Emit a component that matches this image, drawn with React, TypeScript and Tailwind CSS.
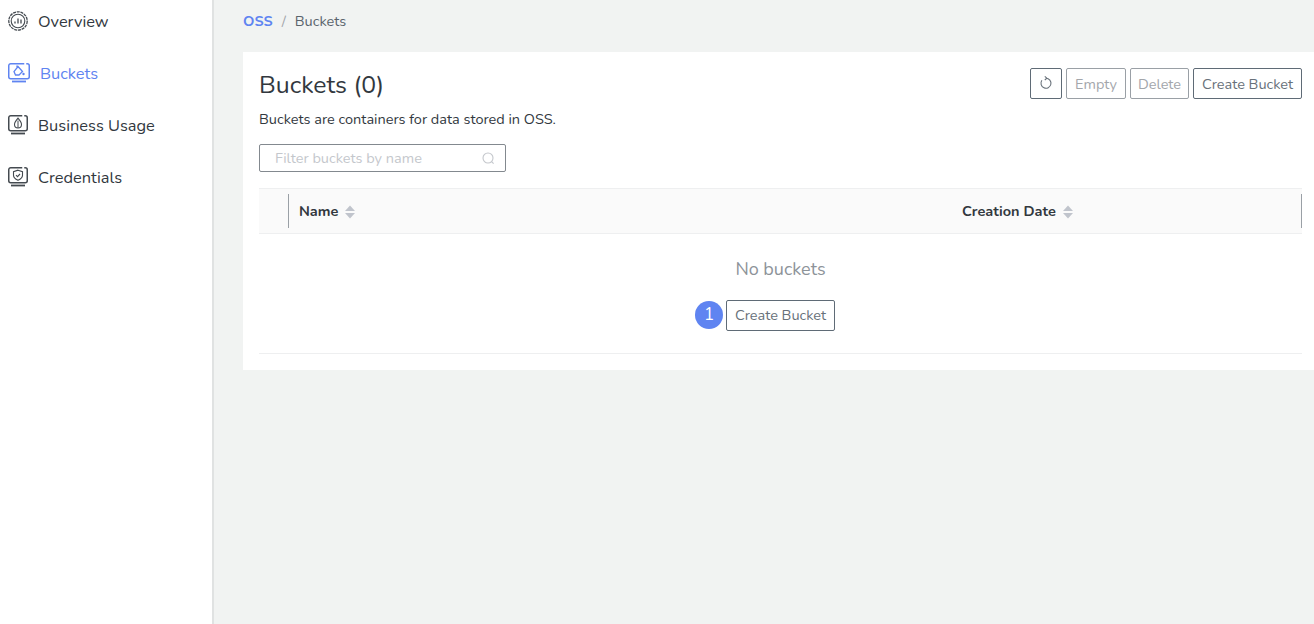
import React from "react";

function MonitorIcon({ children, color, wide }: { children?: React.ReactNode; color: string; wide?: boolean }) {
  const right = wide ? 21.25 : 19.25;
  return (
    <svg width={wide ? 22 : 20} height="20" viewBox={wide ? "0 0 22 20" : "0 0 20 20"} fill="none" stroke={color} strokeWidth="1.5">
      <path d={`M${right - 5} 0.75H2.75a2 2 0 0 0-2 2v11a2 2 0 0 0 2 2H${right - 2}a2 2 0 0 0 2-2v-11a2 2 0 0 0-2-2H${right - 3}`} />
      <path d={wide ? "M4 18.5h14" : "M3 18.5h14"} strokeWidth="1.8" />
      {children}
    </svg>
  );
}

function OverviewIcon() {
  return (
    <svg width="20" height="20" viewBox="0 0 20 20" fill="none" stroke="#444a50">
      <circle cx="10" cy="10" r="9.2" strokeWidth="1.3" strokeDasharray="3 0.8" />
      <circle cx="10" cy="10" r="6.8" strokeWidth="1.1" />
      <path d="M7 12.5v-2M10 12.5V7.5M13 12.5V8.5" strokeWidth="1.3" />
    </svg>
  );
}

function BucketIcon() {
  return (
    <MonitorIcon color="#5f84f1" wide>
      <path d="M9 2.5v3M10 3.5l4.5 5-3.5 3.5H7.5L6 8.5z" strokeWidth="1.3" />
      <circle cx="15.5" cy="11" r="1.2" fill="#5f84f1" stroke="none" />
    </MonitorIcon>
  );
}

function UsageIcon() {
  return (
    <MonitorIcon color="#444a50">
      <path d="M10 3.2c-2.5 3-3.5 4.6-3.5 6.3a3.5 3.5 0 0 0 7 0c0-1.7-1-3.3-3.5-6.3z" strokeWidth="1.1" />
      <path d="M10 5.5v7.5" strokeWidth="1" />
    </MonitorIcon>
  );
}

function CredIcon() {
  return (
    <MonitorIcon color="#444a50">
      <path d="M10 3.2l4.5 1.5v3.6c0 2.4-1.9 3.9-4.5 5-2.6-1.1-4.5-2.6-4.5-5V4.7z" strokeWidth="1.1" />
      <path d="M8 8.1l1.5 1.5 2.5-2.6" strokeWidth="1.1" />
    </MonitorIcon>
  );
}

function NavItem({ icon, label, active }: { icon: React.ReactNode; label: string; active?: boolean }) {
  return (
    <div className={`flex h-[52px] items-center gap-[10px] pl-2 text-[16.4px] ${active ? "text-[#5f84f1]" : "text-[#32383e]"}`}>
      {icon}
      <span className="pt-[2px]">{label}</span>
    </div>
  );
}

function SortCaret() {
  return (
    <svg width="10" height="14" viewBox="0 0 10 14" fill="#c0c4cc">
      <path d="M5 0.5L10 6H0z" />
      <path d="M5 13.5L10 8H0z" />
    </svg>
  );
}

function Btn({ children, disabled, className = "" }: { children: React.ReactNode; disabled?: boolean; className?: string }) {
  return (
    <button
      className={`flex h-[31px] items-center justify-center rounded-[2px] border bg-white text-[14.5px] ${
        disabled ? "border-[#9aa0a6] text-[#a3a6ab]" : "border-[#5f6b76] text-[#68717a]"
      } ${className}`}
    >
      {children}
    </button>
  );
}

export default function App() {
  return (
    <div className="flex h-[624px] w-[1314px] overflow-hidden bg-[#f1f3f2] font-['Nunito','Lato','Noto_Sans',sans-serif]">
      <aside className="h-full w-[214px] shrink-0 border-r-2 border-[#e0e2e2] bg-white">
        <div className="-mt-[5px]">
          <NavItem icon={<OverviewIcon />} label="Overview" />
          <NavItem icon={<BucketIcon />} label="Buckets" active />
          <NavItem icon={<UsageIcon />} label="Business Usage" />
          <NavItem icon={<CredIcon />} label="Credentials" />
        </div>
      </aside>
      <main className="min-w-0 flex-1 pl-[29px]">
        <div className="flex h-[52px] items-start gap-[9px] pt-[12px] text-[14.5px] leading-[18px]">
          <span className="font-bold text-[#5f84f1]">OSS</span>
          <span className="text-[#a3a6ab]">/</span>
          <span className="text-[#5a636c]">Buckets</span>
        </div>
        <section className="h-[318px] bg-white pl-[16px] pr-[12px]">
          <div className="flex items-start justify-between pt-[16px]">
            <div>
              <h1 className="text-[24.8px] leading-[34px] text-[#32383e]">Buckets (0)</h1>
              <p className="mt-[8px] text-[14.5px] leading-[18px] text-[#32383e]">Buckets are containers for data stored in OSS.</p>
            </div>
            <div className="flex gap-[4px]">
              <Btn className="w-[32px]">
                <svg width="14" height="14" viewBox="0 0 14 14" fill="none" stroke="#68717a" strokeWidth="1.1" className="-translate-y-px">
                  <path d="M7 2.2A5 5 0 1 1 2.9 4.3" />
                  <path d="M5.8 0.4L7.8 2.2 5.8 4" />
                </svg>
              </Btn>
              <Btn disabled className="w-[60px] pt-[2px]">Empty</Btn>
              <Btn disabled className="w-[59px] pt-[2px]">Delete</Btn>
              <Btn className="w-[109px] pt-[2px]">Create Bucket</Btn>
            </div>
          </div>
          <div className="mt-[16px] flex h-[28px] w-[247px] items-center justify-between rounded-[2px] border border-[#83898f] pl-[15px] pr-[10px] text-[14.5px] text-[#c4c7cc]">
            <span className="pt-[2px]">Filter buckets by name</span>
            <svg width="13" height="13" viewBox="0 0 13 13" fill="none" stroke="#c4c7cc" strokeWidth="1.1">
              <circle cx="6" cy="6" r="5" />
              <path d="M9.6 9.6l2 2" />
            </svg>
          </div>
          <div className="mt-[16px] flex h-[46px] items-center border-y border-[#eeeff0] bg-[#fafafa] text-[14.5px] font-bold text-[#32383e]">
            <div className="h-[34px] w-[30px] shrink-0 border-r border-[#9aa0a6]" />
            <div className="flex w-[673px] shrink-0 items-center gap-[7px] pl-[10px] pt-[2px]">
              Name <SortCaret />
            </div>
            <div className="flex flex-1 items-center gap-[7px] pt-[2px]">
              Creation Date <SortCaret />
            </div>
            <div className="h-[34px] w-px shrink-0 bg-[#9aa0a6]" />
          </div>
          <div className="flex h-[120px] flex-col items-center border-b border-[#eeeff0]">
            <div className="mt-[23px] text-[18px] leading-[24px] text-[#8d9399]">No buckets</div>
            <div className="relative mt-[19px]">
              <div className="absolute right-[112px] top-[1px] flex h-[28px] w-[28px] items-center justify-center rounded-full bg-[#5f84f1] text-[17px] text-white">1</div>
              <Btn className="w-[109px]">Create Bucket</Btn>
            </div>
          </div>
        </section>
      </main>
    </div>
  );
}
